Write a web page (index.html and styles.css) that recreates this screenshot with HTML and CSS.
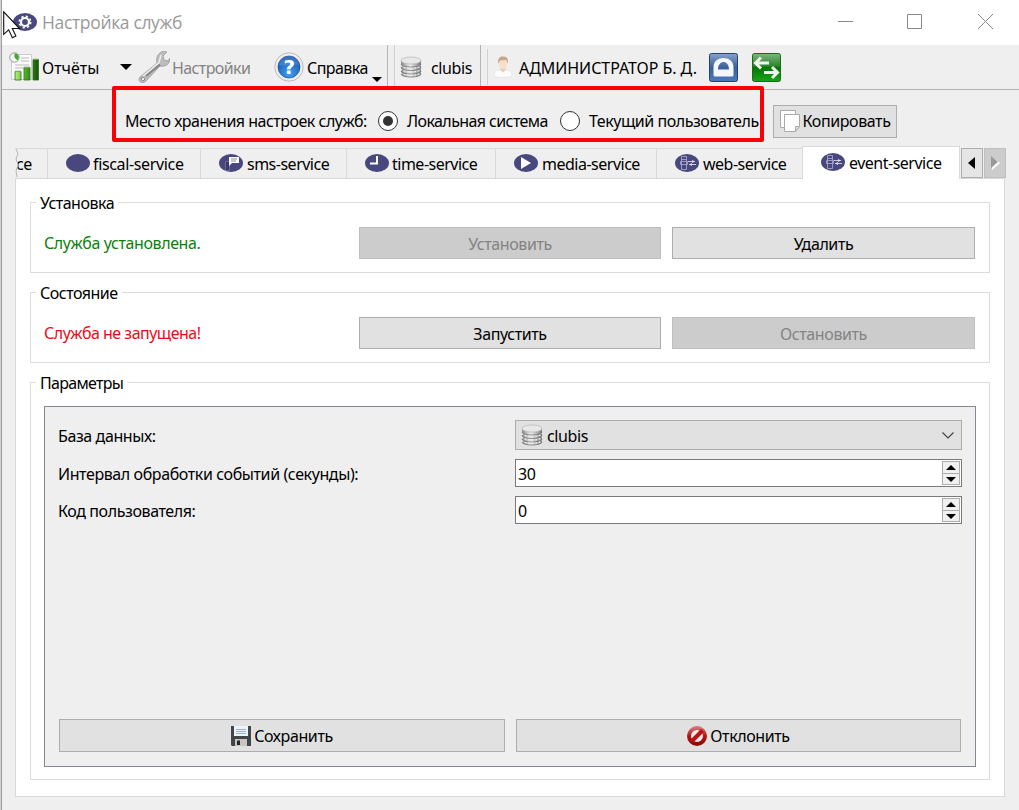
FILE: index.html
```html
<!DOCTYPE html>
<html lang="ru">
<head>
    <meta charset="UTF-8">
    <meta name="viewport" content="width=device-width, initial-scale=1.0">
    <title>Настройка служб</title>
    <link rel="stylesheet" href="styles.css">
</head>
<body>
    <svg class="defs" width="0" height="0">
        <defs>
            <linearGradient id="metal" x1="0" x2="1" y1="0" y2="0">
                <stop offset="0" stop-color="#888"/>
                <stop offset=".45" stop-color="#eee"/>
                <stop offset="1" stop-color="#777"/>
            </linearGradient>
            <linearGradient id="green-bar" x1="0" x2="1" y1="0" y2="0">
                <stop offset="0" stop-color="#b5ef7d"/>
                <stop offset=".5" stop-color="#46a51e"/>
                <stop offset="1" stop-color="#14520a"/>
            </linearGradient>
            <linearGradient id="blue-box" x1="0" x2="0" y1="0" y2="1">
                <stop offset="0" stop-color="#88a2c8"/>
                <stop offset=".5" stop-color="#3c5f9c"/>
                <stop offset="1" stop-color="#4c79ba"/>
            </linearGradient>
            <linearGradient id="green-box" x1="0" x2="0" y1="0" y2="1">
                <stop offset="0" stop-color="#7fb57f"/>
                <stop offset=".45" stop-color="#2c852c"/>
                <stop offset=".5" stop-color="#047404"/>
                <stop offset="1" stop-color="#19a519"/>
            </linearGradient>
            <radialGradient id="help-blue" cx=".5" cy=".8" r=".8">
                <stop offset="0" stop-color="#3fa0ee"/>
                <stop offset="1" stop-color="#1350a8"/>
            </radialGradient>
            <linearGradient id="deny-red" x1="0" x2="0" y1="0" y2="1">
                <stop offset="0" stop-color="#cf7272"/>
                <stop offset=".5" stop-color="#b81212"/>
                <stop offset="1" stop-color="#8c0a0a"/>
            </linearGradient>
            <symbol id="db" viewBox="0 0 22 22">
                <path d="M1 4v14c0 4 20 4 20 0V4z" fill="url(#metal)"/>
                <path d="M1 8c0 4 20 4 20 0M1 11.500c0 4 20 4 20 0M1 15c0 4 20 4 20 0M1 18c0 4 20 4 20 0" fill="none" stroke="#777" stroke-width=".8"/>
                <path d="M1 9.300c0 4 20 4 20 0M1 12.800c0 4 20 4 20 0M1 16.200c0 4 20 4 20 0" fill="none" stroke="#eee" stroke-width="1.200" stroke-dasharray="2 1.500"/>
                <ellipse cx="11" cy="4.500" rx="10" ry="3.500" fill="#e8e8e8" stroke="#b5b5b5" stroke-width=".7"/>
            </symbol>
            <symbol id="server" viewBox="0 0 24 18">
                <ellipse cx="12" cy="9" rx="12" ry="9" fill="#48487f"/>
                <path d="M6.500 2.500h5v13h-5zM6.500 5.500h5M5.500 7.500h7v3h-7z" fill="none" stroke="#a5a5c8" stroke-width=".9"/>
                <path d="M13 7.500h7M14 10.500h7" stroke="#c9c9de"/>
                <path d="M17 6v3l3-1.500zM17 9v3l-3-1.500z" fill="#dcdcec"/>
            </symbol>
        </defs>
    </svg>

    <div class="window">
        <div class="title-bar">
            <svg class="app-icon" width="24" height="18" viewBox="0 0 24 18">
                <ellipse cx="12" cy="9" rx="12" ry="9" fill="#48487f"/>
                <circle cx="12" cy="9" r="4" fill="none" stroke="#fff" stroke-width="2.200"/>
                <circle cx="12" cy="9" r="5.700" fill="none" stroke="#fff" stroke-width="1.600" stroke-dasharray="2.240 2.240"/>
            </svg>
            <span class="title">Настройка служб</span>
            <svg class="window-buttons" width="160" height="20" viewBox="0 0 160 20" fill="none" stroke="#888">
                <path d="M0 9.500h15M69.500 2.500h14v14h-14z"/>
                <path d="M140 2l15 15M155 2l-15 15"/>
            </svg>
        </div>

        <div class="toolbar">
            <div class="tool reports">
                <svg width="30" height="30" viewBox="0 0 30 30">
                    <path d="M2.500 2.500h20v25h-20z" fill="#fafafa" stroke="#ccc"/>
                    <path d="M12 6h8M12 9h8M6 13h14M6 16h14" stroke="#bbb"/>
                    <circle cx="5.500" cy="5.500" r="4.700" fill="#f4faf0" stroke="#999"/>
                    <path d="M5.500 5.500V1.500a4 4 0 0 1 3 7z" fill="#42a832"/>
                    <path d="M6 19.500h6V28H6zM15 15.500h6V28h-6zM24 7.500h5.500V28H24z" fill="url(#green-bar)" stroke="#287218" stroke-width=".8"/>
                    <path d="M6 19h6M15 15h6M24 7h5.500" stroke="#a4cf8a"/>
                </svg>
                <span>Отчёты</span>
            </div>
            <svg class="reports-arrow" width="12" height="7" viewBox="0 0 12 7"><path d="M0 0h12L6 6z"/></svg>
            <div class="tool settings">
                <svg width="32" height="32" viewBox="0 0 32 32">
                    <path d="M2 26L19 12c-1-4 0-8 3-10 2-2 5-2 7-1l-4 4 1 4 4 1 2-3c0 6-4 9-10 8L8 30c-4 4-9 0-6-4z" fill="#bdbdbd" stroke="#999" stroke-width=".8"/>
                    <path d="M8 25L22 13.500" stroke="#858585" stroke-width="2"/>
                    <path d="M5 25L21 11.500l2-7.500" fill="none" stroke="#eee" stroke-width="1.500"/>
                    <circle cx="5" cy="28" r="1.600" fill="#fff" stroke="#888"/>
                </svg>
                <span>Настройки</span>
            </div>
            <div class="tool help">
                <svg width="30" height="30" viewBox="0 0 30 30">
                    <circle cx="15" cy="15" r="14.200" fill="#eee" stroke="#bbb"/>
                    <circle cx="15" cy="15" r="11" fill="url(#help-blue)" stroke="#1650a0" stroke-width=".7"/>
                    <path d="M5 13C6 1 24 1 25 13c-6-2-14 2-20 0z" fill="#fff" opacity=".15"/>
                    <text class="question" x="15" y="22" text-anchor="middle">?</text>
                </svg>
                <span>Справка</span>
                <svg class="help-arrow" width="10" height="6" viewBox="0 0 10 6"><path d="M0 0h10L5 5z"/></svg>
            </div>
            <div class="tool database">
                <svg width="22" height="22"><use href="#db"/></svg>
                <span>clubis</span>
            </div>
            <div class="tool user">
                <svg width="18" height="22" viewBox="0 0 18 22">
                    <path d="M0 20c0-5 3-6 6-6h6c3 0 6 1 6 6-4 2-14 2-18 0z" fill="#fcfcfc" stroke="#ddd" stroke-width=".6"/>
                    <path d="M6.500 11h5v3L9 16.500 6.500 14z" fill="#ecc9ac"/>
                    <ellipse cx="9" cy="7.500" rx="4" ry="5.500" fill="#f9dfc8"/>
                    <path d="M4.500 8C3 1 7 0 10 .500c3 0 5 3 3.500 7.500L12.500 4 6 4.500z" fill="#c5a88c"/>
                </svg>
                <span>АДМИНИСТРАТОР Б. Д.</span>
            </div>
            <svg class="lock" width="29" height="29" viewBox="0 0 29 29">
                <rect x=".5" y=".5" width="28" height="28" rx="2" fill="url(#blue-box)" stroke="#24446f"/>
                <path d="M4.500 22v-8C4.500 2 24.500 2 24.500 14v8q0 1.500-1.500 1.500H6q-1.500 0-1.500-1.500zM9 16.500h11c0-10-11-10-11 0z" fill="#f4f6fb" fill-rule="evenodd"/>
            </svg>
            <svg class="swap" width="29" height="29" viewBox="0 0 29 29">
                <rect x=".5" y=".5" width="28" height="28" rx="2" fill="url(#green-box)" stroke="#1b6a1b"/>
                <path d="M17 10H4M9 4.500L3.500 10 9 15.500M12 19.500h13M20 14l5.500 5.500L20 25" fill="none" stroke="#eef5ee" stroke-width="3"/>
            </svg>
        </div>

        <div class="storage">
            <span class="storage-label">Место хранения настроек служб:</span>
            <span class="radio checked"></span>
            <span class="local">Локальная система</span>
            <span class="radio"></span>
            <span class="current">Текущий пользователь</span>
            <button class="button copy">
                <svg width="20" height="22" viewBox="0 0 20 22" fill="#fdfdfd" stroke="#aaa">
                    <path d="M.5.500h15v17H.5z"/>
                    <path d="M4.500 4.500h15v12l-4 5h-11z"/>
                    <path d="M19.500 16.500h-4v5z" fill="#e4e4e4"/>
                </svg>
                <span>Копировать</span>
            </button>
        </div>

        <div class="tabs">
            <div class="tab cut">
                <span>ce</span>
                <svg class="tear" width="5" height="30" viewBox="0 0 5 30"><path d="M0 0h1l2 5-2 5 2 6-2 6 1 7H0z" fill="#efefef"/><path d="M1 0l2 5-2 5 2 6-2 6 1 6" fill="none" stroke="#b5b5b5"/></svg>
            </div>
            <div class="tab fiscal">
                <svg width="24" height="18" viewBox="0 0 24 18"><ellipse cx="12" cy="9" rx="12" ry="9" fill="#48487f"/></svg>
                <span>fiscal-service</span>
            </div>
            <div class="tab sms">
                <svg width="24" height="18" viewBox="0 0 24 18">
                    <ellipse cx="12" cy="9" rx="12" ry="9" fill="#48487f"/>
                    <path d="M6.500 7.500h4v9h-4z" fill="#39396c" stroke="#74749c" stroke-width=".8"/>
                    <path d="M10 3h10v6h-7l-3 3z" fill="#fff"/>
                    <path d="M12 5h6M12 7h5" stroke="#8c8cae"/>
                </svg>
                <span>sms-service</span>
            </div>
            <div class="tab time">
                <svg width="24" height="18" viewBox="0 0 24 18">
                    <ellipse cx="12" cy="9" rx="12" ry="9" fill="#48487f"/>
                    <path d="M12 2v7.500H5" fill="none" stroke="#fff" stroke-width="2"/>
                </svg>
                <span>time-service</span>
            </div>
            <div class="tab media">
                <svg width="24" height="18" viewBox="0 0 24 18">
                    <ellipse cx="12" cy="9" rx="12" ry="9" fill="#48487f"/>
                    <path d="M7 3v12l10-6z" fill="#fff"/>
                </svg>
                <span>media-service</span>
            </div>
            <div class="tab web">
                <svg width="24" height="18"><use href="#server"/></svg>
                <span>web-service</span>
            </div>
            <div class="tab event active">
                <svg width="24" height="18"><use href="#server"/></svg>
                <span>event-service</span>
            </div>
            <div class="scroll">
                <svg width="8" height="12" viewBox="0 0 8 12"><path d="M7 0v12L0 6z"/></svg>
            </div>
            <div class="scroll disabled">
                <svg width="9" height="14" viewBox="0 0 9 14"><path d="M1 1v13l8-7z" fill="#fff"/><path d="M0 0v12l7-6z" fill="#999"/></svg>
            </div>
        </div>

        <div class="pane">
            <fieldset class="group">
                <legend>Установка</legend>
                <div class="service-row">
                    <span class="status installed">Служба установлена.</span>
                    <button class="button" disabled>Установить</button>
                    <button class="button">Удалить</button>
                </div>
            </fieldset>
            <fieldset class="group">
                <legend>Состояние</legend>
                <div class="service-row">
                    <span class="status stopped">Служба не запущена!</span>
                    <button class="button">Запустить</button>
                    <button class="button" disabled>Остановить</button>
                </div>
            </fieldset>
            <fieldset class="group params">
                <legend>Параметры</legend>
                <div class="panel">
                    <div class="fields">
                        <label>База данных:</label>
                        <div class="select">
                            <svg width="22" height="22"><use href="#db"/></svg>
                            <span>clubis</span>
                            <svg class="chevron" width="12" height="7" viewBox="0 0 12 7"><path d="M.5.500L6 6 11.500.500" fill="none" stroke="#444" stroke-width="1.200"/></svg>
                        </div>
                        <label>Интервал обработки событий (секунды):</label>
                        <div class="spin">
                            <span>30</span>
                            <div class="steps">
                                <i><svg width="10" height="5" viewBox="0 0 10 5"><path d="M0 5h10L5 0z"/></svg></i>
                                <i><svg width="10" height="5" viewBox="0 0 10 5"><path d="M0 0h10L5 5z"/></svg></i>
                            </div>
                        </div>
                        <label>Код пользователя:</label>
                        <div class="spin">
                            <span>0</span>
                            <div class="steps">
                                <i><svg width="10" height="5" viewBox="0 0 10 5"><path d="M0 5h10L5 0z"/></svg></i>
                                <i><svg width="10" height="5" viewBox="0 0 10 5"><path d="M0 0h10L5 5z"/></svg></i>
                            </div>
                        </div>
                    </div>
                    <div class="actions">
                        <button class="button">
                            <svg width="20" height="20" viewBox="0 0 20 20">
                                <path d="M0 0h20v20H1l-1-1z" fill="#41464b"/>
                                <path d="M3 0h14v10H3z" fill="#edf3fa"/>
                                <path d="M5 3.500h10M5 5.500h10M5 7.500h10" stroke="#9bb1c6"/>
                                <path d="M4 13h12v7H4z" fill="#c9c6c1"/>
                                <path d="M6 14.500h3V19H6z" fill="#25282b"/>
                            </svg>
                            <span>Сохранить</span>
                        </button>
                        <button class="button">
                            <svg width="20" height="20" viewBox="0 0 20 20">
                                <circle cx="10" cy="10" r="8" fill="#f3eaea" stroke="url(#deny-red)" stroke-width="4"/>
                                <path d="M4.500 15.500l11-11" stroke="#b81414" stroke-width="4"/>
                            </svg>
                            <span>Отклонить</span>
                        </button>
                    </div>
                </div>
            </fieldset>
        </div>
    </div>

    <div class="highlight"></div>
    <svg class="cursor" width="20" height="30" viewBox="0 0 20 30">
        <path d="M.7.800v22.500l5-4.500 3.700 8 3.500-1.700-3.600-7.600h7.200z" fill="#fff" stroke="#111" stroke-width="1.100"/>
    </svg>
</body>
</html>
```

FILE: styles.css
```css
* {
    box-sizing: border-box;
}
body {
    margin: 0;
    height: 810px;
    overflow: hidden;
    background-color: #d2d2d2;
    color: #000;
    font-family: "Noto Sans", sans-serif;
    font-size: 16px;
    line-height: 20px;
    letter-spacing: -0.4px;
    white-space: nowrap;
}
svg {
    display: block;
    flex: none;
}
.defs {
    position: absolute;
}
.window {
    height: 810px;
    margin-left: 1px;
    border-left: 1px solid #a0a0a0;
    background-color: #efefef;
}
.title-bar {
    display: flex;
    align-items: center;
    height: 45px;
    padding: 0 24px 2px 11px;
    background-color: #fff;
    color: #999;
}
.title {
    margin-left: 5px;
    font-family: "Open Sans", sans-serif;
    font-size: 17.500px;
    letter-spacing: -0.35px;
}
.window-buttons {
    margin-left: auto;
    margin-right: -3px;
}
.toolbar {
    display: flex;
    align-items: center;
    height: 45px;
    padding-left: 7px;
    border-bottom: 1px solid #b4b4b4;
}
.tool {
    display: flex;
    align-items: center;
    gap: 3px;
}
.tool span {
    padding-top: 2px;
}
.reports {
    width: 111px;
    letter-spacing: 0;
}
.settings {
    width: 136px;
    margin-left: 6px;
    gap: 2px;
    color: #838383;
    letter-spacing: -0.6px;
}
.help {
    position: relative;
    width: 114px;
    height: 43px;
    align-self: flex-start;
    border-right: 1px solid #b4b4b4;
    letter-spacing: -0.55px;
}
.help-arrow {
    position: absolute;
    right: 5px;
    bottom: 5px;
}
.question {
    font-family: "DejaVu Sans", sans-serif;
    font-size: 20px;
    font-weight: bold;
    fill: #fff;
}
.database {
    width: 87px;
    height: 43px;
    margin-left: 6px;
    padding-left: 5px;
    gap: 9px;
    align-self: flex-start;
    border-left: 1px solid #d0d0d0;
    border-right: 1px solid #b4b4b4;
}
.user {
    width: 222px;
    height: 36px;
    margin-left: 6px;
    padding-left: 6px;
    gap: 7px;
    border-left: 1px solid #d0d0d0;
    letter-spacing: -0.05px;
}
.swap {
    margin-left: 14px;
}
.storage {
    display: flex;
    align-items: center;
    height: 56px;
    padding: 6px 0 0 123px;
}
.storage-label {
    width: 253px;
    letter-spacing: -0.5px;
}
.radio {
    display: flex;
    align-items: center;
    justify-content: center;
    width: 20px;
    height: 20px;
    border: 1px solid #333;
    border-radius: 50%;
    background-color: #fff;
}
.radio.checked::before {
    content: "";
    width: 10px;
    height: 10px;
    border-radius: 50%;
    background-color: #333;
}
.local {
    width: 153px;
    margin-left: 9px;
    letter-spacing: -0.6px;
}
.current {
    width: 184px;
    margin-left: 9px;
    letter-spacing: -0.45px;
}
.button {
    display: flex;
    align-items: center;
    justify-content: center;
    gap: 3px;
    height: 33px;
    padding: 0;
    border: 1px solid #adadad;
    background-color: #e1e1e1;
    color: #000;
    font: inherit;
    letter-spacing: inherit;
}
.button:disabled {
    border-color: #bfbfbf;
    background-color: #ccc;
    color: #838383;
}
.copy {
    width: 124px;
}
.tabs {
    display: flex;
    align-items: flex-end;
    height: 32px;
    margin-left: 13px;
}
.tab {
    display: flex;
    align-items: center;
    gap: 3px;
    height: 30px;
    padding-left: 18px;
    border-top: 1px solid #d9d9d9;
    border-right: 1px solid #d9d9d9;
    letter-spacing: -0.5px;
}
.tab span {
    padding-top: 1px;
}
.tab svg {
    margin-top: -1px;
}
.cut {
    position: relative;
    width: 33px;
    padding-left: 1px;
}
.tab .tear {
    position: absolute;
    left: 0;
    top: 0;
    margin: 0;
}
.fiscal {
    width: 153px;
    letter-spacing: -0.35px;
}
.sms {
    width: 146px;
    gap: 4px;
}
.time {
    width: 149px;
}
.media {
    width: 161px;
    gap: 4px;
}
.web {
    width: 145px;
    gap: 4px;
    border-right: none;
}
.active {
    width: 158px;
    height: 33px;
    margin-bottom: -1px;
    padding-bottom: 2px;
    gap: 4px;
    border-left: 1px solid #d9d9d9;
    background-color: #fff;
    z-index: 1;
}
.scroll {
    display: flex;
    align-items: center;
    justify-content: center;
    width: 22px;
    height: 30px;
    margin-left: 1px;
    border: 1px solid #adadad;
    background-color: #e5e5e5;
}
.scroll.disabled {
    border-color: #bfbfbf;
    background-color: #ccc;
}
.pane {
    display: flex;
    flex-direction: column;
    gap: 9px;
    width: 990px;
    height: 619px;
    margin-left: 13px;
    padding: 13px 14px 0;
    border: 1px solid #d9d9d9;
    background-color: #fff;
}
.group {
    width: 960px;
    height: 81px;
    margin: 0;
    padding: 15px 14px 0 13px;
    border: 1px solid #dcdcdc;
}
.group legend {
    height: 20px;
    margin-left: -8px;
    padding: 0 4px;
    line-height: 22px;
    letter-spacing: -0.5px;
}
.params {
    height: 408px;
    padding: 14px 13px 0;
}
.params legend {
    letter-spacing: -0.7px;
}
.service-row {
    display: grid;
    grid-template-columns: 304px 302px 303px;
    column-gap: 11px;
    align-items: center;
}
.service-row .button {
    height: 32px;
    padding-top: 1px;
}
.status {
    letter-spacing: -0.4px;
}
.installed {
    color: #0c800c;
}
.stopped {
    color: #e80c18;
    letter-spacing: -0.5px;
}
.panel {
    display: flex;
    flex-direction: column;
    justify-content: space-between;
    height: 361px;
    padding: 13px 13px 14px;
    border: 1px solid #828790;
    background-color: #efefef;
}
.fields {
    display: grid;
    grid-template-columns: 457px 447px;
    row-gap: 9px;
    align-items: center;
}
.fields label,
.spin span {
    padding-top: 2px;
}
.select {
    display: flex;
    align-items: center;
    height: 30px;
    padding: 0 7px 0 5px;
    border: 1px solid #adadad;
    background-color: #e1e1e1;
}
.select span {
    margin-left: 4px;
    padding-top: 1px;
}
.chevron {
    margin-left: auto;
}
.spin {
    display: flex;
    align-items: center;
    justify-content: space-between;
    height: 28px;
    padding: 1px 1px 1px 2px;
    border: 1px solid #7a7a7a;
    background-color: #fff;
}
.steps {
    width: 18px;
    height: 24px;
    border: 1px solid #adadad;
    background-color: #f0f0f0;
}
.steps i {
    display: flex;
    align-items: center;
    justify-content: center;
    height: 11px;
}
.steps i + i {
    border-top: 1px solid #adadad;
}
.actions {
    display: grid;
    grid-template-columns: 446px 445px;
    column-gap: 11px;
    margin-left: 1px;
}
.highlight {
    position: absolute;
    left: 112px;
    top: 86px;
    width: 652px;
    height: 56px;
    border: 4px solid #fb0007;
    border-radius: 2px;
}
.cursor {
    position: absolute;
    left: 3px;
    top: 11px;
}
```
